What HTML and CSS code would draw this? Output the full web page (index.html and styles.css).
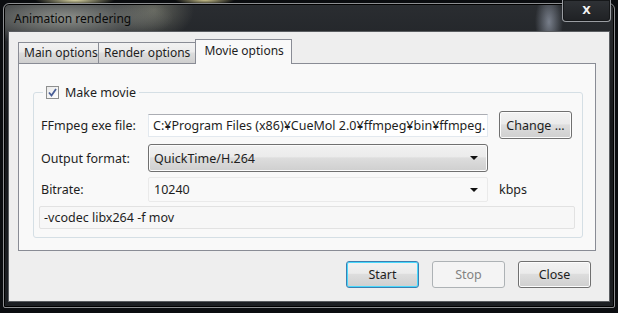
FILE: index.html
```html
<!DOCTYPE html>
<html>
<head>
    <meta charset="UTF-8">
    <title>Animation rendering</title>
    <link rel="stylesheet" href="styles.css">
</head>
<body>

<div class="window">
    <div class="titlebar">
        <span class="title">Animation rendering</span>
        <button class="close-btn">X</button>
    </div>

    <div class="client">
        <div class="tabs">
            <div class="tab">Main options</div>
            <div class="tab">Render options</div>
            <div class="tab active">Movie options</div>
        </div>

        <div class="panel">
            <fieldset class="group">
                <legend class="group-title">
                    <span class="checkbox checked">
                        <svg width="9" height="9" viewBox="0 0 9 9"><path d="M1 4.5 L3.5 7.5 L8 1" fill="none" stroke="#4a5f97" stroke-width="1.8"/></svg>
                    </span>
                    Make movie
                </legend>

                <div class="form-grid">
                    <label class="field-label">FFmpeg exe file:</label>
                    <div class="textbox">C:¥Program Files (x86)¥CueMol 2.0¥ffmpeg¥bin¥ffmpeg.</div>
                    <div class="cell"><button class="btn change">Change ...</button></div>

                    <label class="field-label">Output format:</label>
                    <div class="select">
                        <span>QuickTime/H.264</span>
                        <span class="arrow"></span>
                    </div>
                    <div class="cell"></div>

                    <label class="field-label">Bitrate:</label>
                    <div class="combo">
                        <span>10240</span>
                        <span class="arrow"></span>
                    </div>
                    <div class="cell unit">kbps</div>

                    <div class="args">-vcodec libx264 -f mov</div>
                </div>
            </fieldset>
        </div>

        <div class="buttons">
            <button class="btn default">Start</button>
            <button class="btn" disabled>Stop</button>
            <button class="btn">Close</button>
        </div>
    </div>
</div>

</body>
</html>
```

FILE: styles.css
```css
html, body {
    margin: 0;
    padding: 0;
}
body {
    width: 618px;
    height: 313px;
    overflow: hidden;
    font-family: 'Noto Sans', 'Open Sans', sans-serif;
    font-size: 12px;
    color: #1e1e1e;
    background:
        radial-gradient(ellipse 40px 6px at 75px 0, #d8d3a0, transparent),
        radial-gradient(ellipse 30px 5px at 205px 0, #c9c08a, transparent),
        #0b0d10;
}
.window {
    box-sizing: border-box;
    width: 612px;
    height: 305px;
    margin: 3px 0 0 3px;
    padding: 0 4px 5px 4px;
    border: 1px solid #8d8f92;
    border-radius: 6px 6px 2px 2px;
    display: flex;
    flex-direction: column;
    background:
        radial-gradient(ellipse 110px 28px at 60px 14px, rgba(175, 178, 170, 0.75), transparent),
        radial-gradient(ellipse 40px 30px at 150px 6px, rgba(200, 200, 170, 0.35), transparent),
        radial-gradient(ellipse 14px 30px at 545px 18px, rgba(200, 210, 230, 0.5), transparent),
        linear-gradient(180deg, #2a2d31, #15171a 40%, #1c1f23);
    box-shadow: inset 0 0 0 1px #000;
}
.titlebar {
    height: 27px;
    display: flex;
    justify-content: space-between;
    align-items: flex-start;
}
.title {
    margin: 6px 0 0 6px;
    font-size: 12px;
    color: #0a0a0a;
}
.close-btn {
    width: 49px;
    height: 22px;
    margin: -4px -1px 0 0;
    border: 1px solid #9a9da2;
    border-top: none;
    border-radius: 0 0 4px 4px;
    background: linear-gradient(180deg, #2f3236, #1f2124);
    box-shadow: inset 0 0 0 1px #16181a;
    color: #f2f2f2;
    font-family: 'DejaVu Sans', sans-serif;
    font-weight: bold;
    font-size: 11px;
    padding: 0;
}
.client {
    flex: 1;
    display: flex;
    flex-direction: column;
    border: 1px solid #5a5d61;
    background: #eeeeee;
    padding: 8px 13px 0 9px;
}
.tabs {
    display: flex;
    height: 23px;
    align-items: flex-end;
    position: relative;
    z-index: 1;
}
.tab {
    height: 20px;
    line-height: 19px;
    padding: 0 5px;
    border: 1px solid #898c95;
    border-bottom: none;
    margin-right: -1px;
    background: linear-gradient(180deg, #f2f2f2, #ebebeb 45%, #dddddd 50%, #cfcfcf);
    white-space: nowrap;
}
.tab:first-child {
    width: 69px;
}
.tab.active {
    height: 24px;
    line-height: 21px;
    margin-bottom: -1px;
    padding: 0 7px 0 8px;
    background: #f9f9f9;
}
.panel {
    height: 188px;
    box-sizing: border-box;
    border: 1px solid #898c95;
    background: #f9f9f9;
    padding: 20px 12px 0 14px;
}
.group {
    margin: 0;
    padding: 10px 6px 8px 5px;
    border: 1px solid #d5dfe5;
    border-radius: 3px;
}
.group-title {
    display: flex;
    align-items: center;
    gap: 6px;
    margin-left: 4px;
    padding: 0 3px;
    font-size: 12.5px;
}
.checkbox {
    width: 11px;
    height: 11px;
    border: 1px solid #8e8f8f;
    background: linear-gradient(135deg, #e9e9e9, #ffffff);
    display: flex;
    align-items: center;
    justify-content: center;
}
.form-grid {
    display: grid;
    grid-template-columns: 109px 340px 87px;
    row-gap: 5px;
    align-items: center;
}
.field-label {
    padding-left: 2px;
    font-size: 12.5px;
}
.textbox {
    height: 23px;
    box-sizing: border-box;
    border: 1px solid #e3e9ef;
    border-top-color: #abadb3;
    background: #fff;
    padding: 0 4px;
    line-height: 21px;
    white-space: nowrap;
    overflow: hidden;
    font-size: 12.5px;
}
.cell {
    padding-left: 11px;
}
.btn {
    width: 73px;
    height: 27px;
    border: 1px solid #707070;
    border-radius: 3px;
    background: linear-gradient(180deg, #f2f2f2, #ebebeb 45%, #dddddd 50%, #cfcfcf);
    box-shadow: inset 0 0 0 1px #fcfcfc;
    font-family: inherit;
    font-size: 12.5px;
    color: #1e1e1e;
    padding: 0;
}
.btn.change {
    height: 28px;
}
.btn.default {
    border-color: #3c7fb1;
    box-shadow: inset 0 0 0 1px #48d8fc;
}
.btn:disabled {
    border-color: #adb2b5;
    background: #f4f4f4;
    box-shadow: none;
    color: #838383;
}
.select, .combo {
    display: flex;
    align-items: center;
    justify-content: space-between;
    box-sizing: border-box;
    padding: 0 9px 0 5px;
    font-size: 12.5px;
}
.select {
    height: 28px;
    border: 1px solid #707070;
    border-radius: 3px;
    background: linear-gradient(180deg, #f2f2f2, #ebebeb 45%, #dddddd 50%, #cfcfcf);
    box-shadow: inset 0 0 0 1px #fcfcfc;
}
.combo {
    height: 25px;
    border: 1px solid #eaeaea;
    border-radius: 2px;
    background: #f9f9f9;
}
.arrow {
    width: 0;
    height: 0;
    border-left: 4px solid transparent;
    border-right: 4px solid transparent;
    border-top: 4px solid #111;
}
.unit {
    font-size: 12.5px;
}
.args {
    grid-column: 1 / 4;
    height: 23px;
    box-sizing: border-box;
    border: 1px solid #e2e2e2;
    border-radius: 2px;
    background: #f7f7f7;
    padding: 0 4px;
    line-height: 21px;
    font-size: 12.5px;
    margin-top: -1px;
}
.buttons {
    display: flex;
    justify-content: flex-end;
    gap: 13px;
    padding: 10px 5px 0 0;
}
```
